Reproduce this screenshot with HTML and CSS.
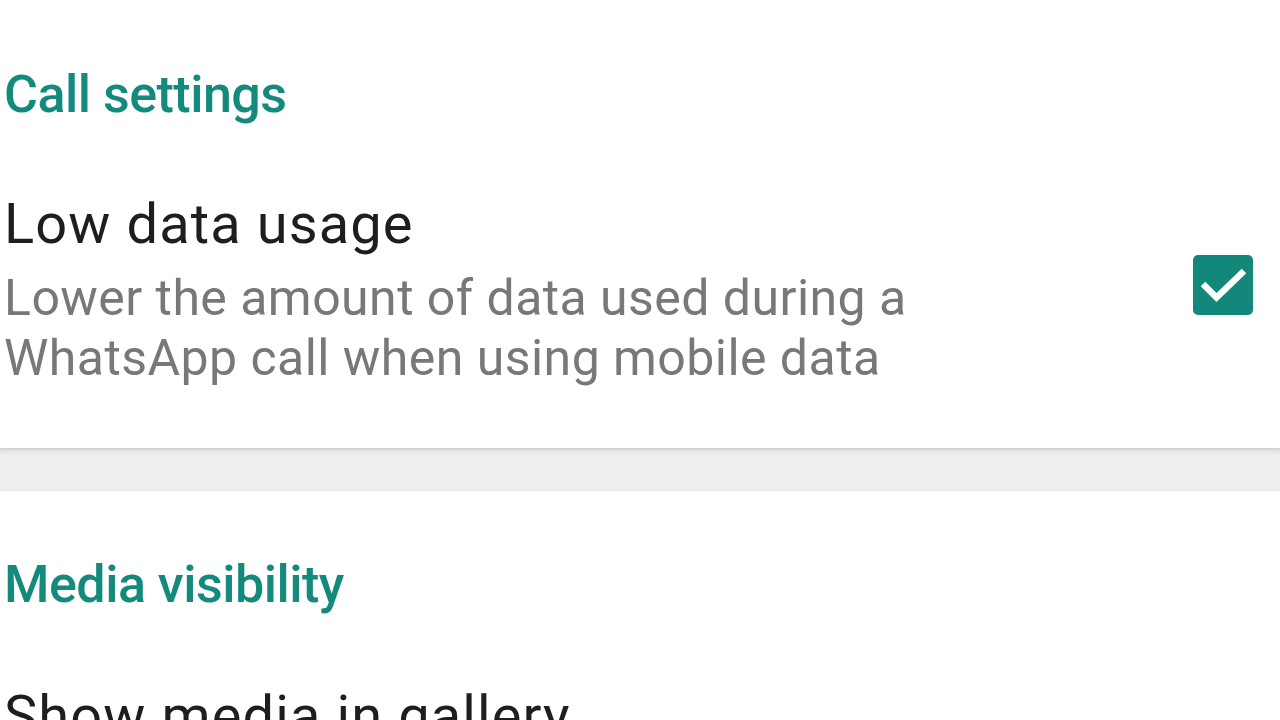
FILE: index.html
```html
<!DOCTYPE html>
<html>
<head>
<meta charset="utf-8">
<link rel="stylesheet" href="styles.css">
</head>
<body>
<div class="page">
  <section class="group group-first">
    <h2 class="group-title">Call settings</h2>
    <div class="pref">
      <div class="pref-text">
        <div class="pref-title">Low data usage</div>
        <div class="pref-summary">Lower the amount of data used during a<br>WhatsApp call when using mobile data</div>
      </div>
      <div class="checkbox">
        <svg viewBox="0 0 60 60" width="60" height="60"><path d="M10 29l13.5 13.5L51 16" fill="none" stroke="#fff" stroke-width="6.5" stroke-linecap="butt" stroke-linejoin="miter"/></svg>
      </div>
    </div>
  </section>
  <div class="separator"></div>
  <section class="group group-second">
    <h2 class="group-title">Media visibility</h2>
    <div class="pref pref-last">
      <div class="pref-text">
        <div class="pref-title">Show media in gallery</div>
      </div>
    </div>
  </section>
</div>
</body>
</html>
```
FILE: styles.css
```css
html, body { margin: 0; padding: 0; background: #fff; }
body { font-family: Roboto, "Noto Sans", sans-serif; width: 1280px; height: 720px; overflow: hidden; }
.page { display: flex; flex-direction: column; }
.group { padding-left: 4px; }
.group-first { padding-top: 65px; padding-bottom: 60px; }
.group-second { padding-top: 64px; }
.group-title {
  margin: 0;
  font-size: 52px;
  font-weight: 500;
  color: #138a7c;
  line-height: 60px;
  letter-spacing: -0.5px;
}
.pref { display: flex; align-items: flex-start; padding-right: 27px; padding-top: 67px; }
.pref-last { padding-top: 69px; }
.pref-text { flex: 1; }
.pref-title { font-size: 56px; color: #1e1e1e; line-height: 64px; letter-spacing: 1.1px; }
.pref-summary { font-size: 50px; color: #787878; line-height: 60px; margin-top: 12px; letter-spacing: 0.45px; }
.checkbox {
  width: 60px; height: 60px; border-radius: 5px; margin-top: 63px;
  background: #13877a; display: flex;
}
.separator {
  height: 42px; background: #eeeeee;
  border-top: 1px solid #d0d0d0;
  box-shadow: inset 0 4px 5px -3px rgba(0,0,0,0.13), 0 1px 2px rgba(0,0,0,0.04);
}
```
